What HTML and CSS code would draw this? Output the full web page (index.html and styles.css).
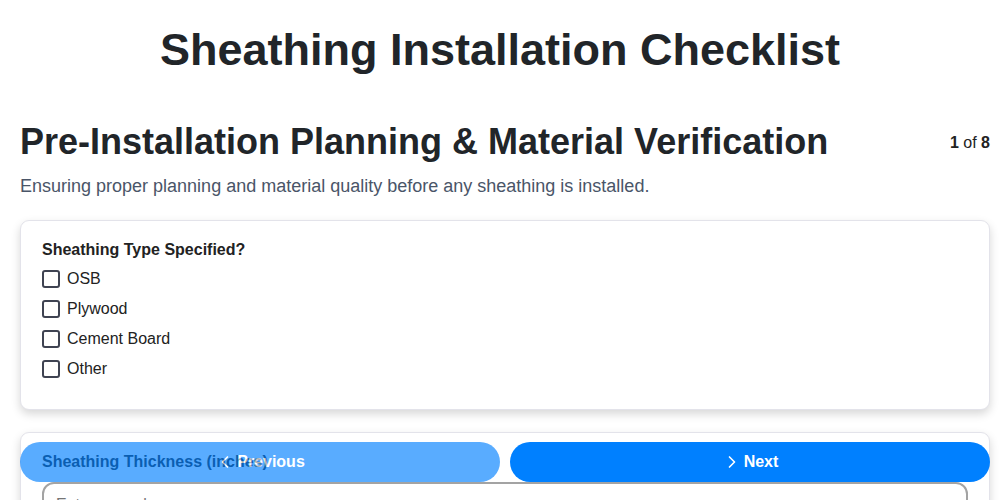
FILE: index.html
```html
<!DOCTYPE html>
<html lang="en">
<head>
    <meta charset="UTF-8">
    <meta name="viewport" content="width=device-width, initial-scale=1.0">
    <title>Sheathing Installation Checklist</title>
    <link rel="stylesheet" href="styles.css">
</head>
<body>
    <header class="page-header">
        <h1>Sheathing Installation Checklist</h1>
    </header>
    <main class="checklist">
        <div class="section-head">
            <h2>Pre-Installation Planning &amp; Material Verification</h2>
            <span class="step-count"><b>1</b> of <b>8</b></span>
        </div>
        <p class="section-desc">Ensuring proper planning and material quality before any sheathing is installed.</p>

        <div class="card">
            <div class="field-label">Sheathing Type Specified?</div>
            <div class="options">
                <label class="option"><input type="checkbox"> OSB</label>
                <label class="option"><input type="checkbox"> Plywood</label>
                <label class="option"><input type="checkbox"> Cement Board</label>
                <label class="option"><input type="checkbox"> Other</label>
            </div>
        </div>

        <div class="card">
            <label class="field-label text-label" for="thickness">Sheathing Thickness (inches)</label>
            <input type="number" id="thickness" class="text-input" placeholder="Enter a number">
        </div>
    </main>

    <nav class="step-nav">
        <button class="nav-btn" disabled>
            <svg width="20" height="20" viewBox="0 0 24 24" fill="none" stroke="currentColor" stroke-width="2" stroke-linecap="round" stroke-linejoin="round"><polyline points="15 18 9 12 15 6"></polyline></svg>
            Previous
        </button>
        <button class="nav-btn">
            <svg width="20" height="20" viewBox="0 0 24 24" fill="none" stroke="currentColor" stroke-width="2" stroke-linecap="round" stroke-linejoin="round"><polyline points="9 18 15 12 9 6"></polyline></svg>
            Next
        </button>
    </nav>
</body>
</html>
```

FILE: styles.css
```css
* {
    box-sizing: border-box;
}

body {
    margin: 0;
    font-family: "Liberation Sans", Arial, sans-serif;
    color: #212529;
    background: #ffffff;
}

.page-header {
    padding-top: 24px;
    text-align: center;
}

.page-header h1 {
    margin: 0;
    font-size: 45px;
    line-height: 52px;
    font-weight: bold;
}

.checklist {
    padding: 0 10px 80px 20px;
}

.section-head {
    display: flex;
    justify-content: space-between;
    align-items: center;
    margin-top: 45px;
}

.section-head h2 {
    margin: 0;
    font-size: 36px;
    line-height: 42px;
    font-weight: bold;
}

.step-count {
    font-size: 16px;
    line-height: 20px;
    padding-top: 2px;
    color: #222;
}

.section-desc {
    margin: 12px 0 23px;
    font-size: 18px;
    line-height: 22px;
    color: #4a5568;
}

.card {
    background: #fff;
    border: 1px solid #e3e3ea;
    border-radius: 9px;
    box-shadow: 0 4px 10px rgba(0, 0, 0, 0.16);
    padding: 20px 21px 29px;
    margin-bottom: 22px;
}

.field-label {
    display: block;
    font-size: 16px;
    line-height: 18px;
    font-weight: bold;
    color: #222;
    margin-bottom: 9px;
}

.text-label {
    margin-bottom: 11px;
}

.options {
    display: flex;
    flex-direction: column;
    gap: 8px;
}

.option {
    display: flex;
    align-items: center;
    gap: 7px;
    height: 22px;
    font-size: 16px;
    color: #222;
    cursor: pointer;
}

.option input {
    appearance: none;
    -webkit-appearance: none;
    margin: 0;
    width: 18px;
    height: 18px;
    border: 2px solid #3f4352;
    border-radius: 3px;
    background: #fff;
}

.text-input {
    display: block;
    width: 100%;
    padding: 12px;
    font-family: inherit;
    font-size: 16px;
    border: 2px solid #a3a3a3;
    border-radius: 12px;
    color: #222;
}

.step-nav {
    position: fixed;
    left: 20px;
    right: 10px;
    bottom: 18px;
    display: flex;
    gap: 10px;
}

.nav-btn {
    flex: 1;
    height: 40px;
    display: flex;
    align-items: center;
    justify-content: center;
    gap: 2px;
    border: none;
    border-radius: 20px;
    background: #0080ff;
    color: #fff;
    font-family: inherit;
    font-size: 16px;
    font-weight: bold;
    cursor: pointer;
}

.nav-btn:disabled {
    opacity: 0.65;
    cursor: default;
}
```
